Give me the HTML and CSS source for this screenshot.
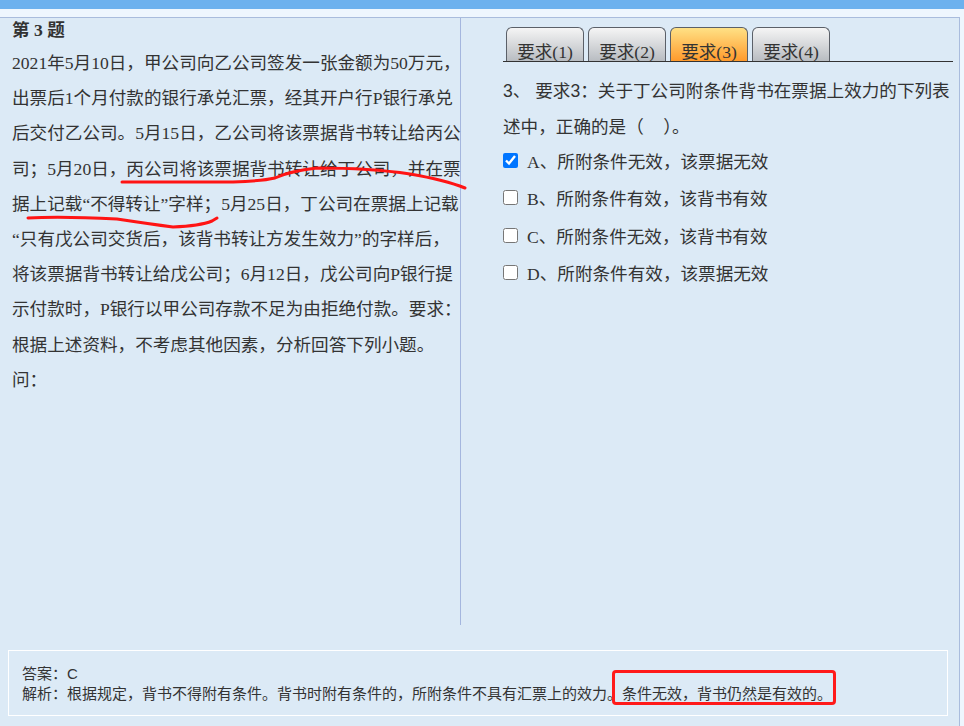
FILE: index.html
```html
<!DOCTYPE html>
<html lang="zh-CN">
<head>
<meta charset="utf-8">
<title>第 3 题</title>
<link rel="stylesheet" href="styles.css">
</head>
<body>
<div class="topbar"></div>
<div class="panel">
  <div class="cols">
    <div class="left">
      <h3 class="qtitle">第 3 题</h3>
      <p class="stem">2021年5月10日，甲公司向乙公司签发一张金额为50万元，<br>出票后1个月付款的银行承兑汇票，经其开户行P银行承兑<br>后交付乙公司。5月15日，乙公司将该票据背书转让给丙公<br>司；5月20日，丙公司将该票据背书转让给丁公司，并在票<br>据上记载“不得转让”字样；5月25日，丁公司在票据上记载<br>“只有戊公司交货后，该背书转让方发生效力”的字样后，<br>将该票据背书转让给戊公司；6月12日，戊公司向P银行提<br>示付款时，P银行以甲公司存款不足为由拒绝付款。要求：<br>根据上述资料，不考虑其他因素，分析回答下列小题。<br>问：</p>
      <svg class="marks" width="470" height="240" viewBox="0 0 470 240">
        <path d="M122 164 L233 164 Q262 163 275 160 Q290 153 317 150 Q370 150 410 156 Q445 162 465 170" />
        <path d="M28 200 Q60 198 117 201 Q150 206 173 209 Q200 208 212 203 L217 200" />
      </svg>
    </div>
    <div class="right">
      <div class="tabs">
        <div class="tab">要求(1)</div>
        <div class="tab">要求(2)</div>
        <div class="tab active">要求(3)</div>
        <div class="tab">要求(4)</div>
      </div>
      <p class="qtext">3、 要求3：关于丁公司附条件背书在票据上效力的下列表<br>述中，正确的是（&nbsp;&nbsp;&nbsp;&nbsp;）。</p>
      <ul class="opts">
        <li class="opt"><input type="checkbox" checked><span class="lbl"><span class="letter">A</span>、所附条件无效，该票据无效</span></li>
        <li class="opt"><input type="checkbox"><span class="lbl"><span class="letter">B</span>、所附条件有效，该背书有效</span></li>
        <li class="opt"><input type="checkbox"><span class="lbl"><span class="letter">C</span>、所附条件无效，该背书有效</span></li>
        <li class="opt"><input type="checkbox"><span class="lbl"><span class="letter">D</span>、所附条件有效，该票据无效</span></li>
      </ul>
    </div>
  </div>
  <div class="answer">
    <div class="aline">答案：C</div>
    <div class="aline">解析：根据规定，背书不得附有条件。背书时附有条件的，所附条件不具有汇票上的效力。<span class="mark">条件无效，背书仍然是有效的。</span></div>
  </div>
</div>
</body>
</html>
```
FILE: styles.css
```css
html, body {
  margin: 0;
  padding: 0;
}
body {
  background: #eef6fe;
  color: #333;
  font-family: "Liberation Serif", "Noto Sans CJK SC", serif;
  width: 964px;
  height: 726px;
  overflow: hidden;
}
.topbar {
  height: 9px;
  background: #6db1ee;
}
.panel {
  margin-top: 8px;
  width: 960px;
  height: 720px;
  box-sizing: border-box;
  border-top: 1px solid #a9bcdd;
  border-right: 1px solid #a9bcdd;
  background: #dceaf6;
}
.cols {
  display: flex;
}
.left {
  position: relative;
  width: 461px;
  height: 607px;
  box-sizing: border-box;
  border-right: 1px solid #a4b6de;
  padding-left: 12px;
}
.qtitle {
  margin: 0;
  font-size: 17.6px;
  line-height: 24px;
  font-weight: bold;
}
.stem {
  margin: 4px 0 0;
  font-size: 17.6px;
  line-height: 35.2px;
  white-space: nowrap;
}
.marks {
  position: absolute;
  left: 0;
  top: 0;
  overflow: visible;
  pointer-events: none;
}
.marks path {
  fill: none;
  stroke: #ff1414;
  stroke-width: 3;
  stroke-linecap: round;
  stroke-linejoin: round;
}
.right {
  flex: 1;
  padding: 9px 6px 0 42px;
}
.tabs {
  display: flex;
  gap: 4px;
  padding-left: 3px;
  border-bottom: 1px solid #333;
}
.tab {
  width: 78px;
  height: 34px;
  box-sizing: border-box;
  border: 1px solid #5b6068;
  border-bottom: none;
  border-radius: 6px 6px 0 0;
  background: linear-gradient(#f5f5f5, #b8bcc1);
  text-align: center;
  font-size: 17.6px;
  line-height: 20px;
  padding-top: 14px;
  color: #333;
}
.tab.active {
  background: linear-gradient(#ffe185, #ff9a2c);
}
.qtext {
  margin: 11px 0 0;
  font-family: "Liberation Sans", "Noto Sans CJK SC", sans-serif;
  font-size: 17.6px;
  line-height: 36px;
  white-space: nowrap;
}
.opts {
  list-style: none;
  margin: 0;
  padding: 0;
  display: flex;
  flex-direction: column;
  gap: 7.5px;
}
.opt {
  height: 30px;
  display: flex;
  align-items: center;
  gap: 9px;
  font-size: 17.6px;
}
.opt input {
  width: 15px;
  height: 15px;
  margin: 0;
}
.letter {
  font-family: "Liberation Serif", serif;
}
.answer {
  margin: 25px 0 0 8px;
  width: 940px;
  box-sizing: border-box;
  border: 1px solid #fff;
  padding: 13px 13px 11px;
  font-family: "Liberation Sans", "Noto Sans CJK SC", sans-serif;
  font-size: 15px;
  line-height: 20px;
}
.mark {
  position: relative;
}
.mark::after {
  content: "";
  position: absolute;
  left: -10px;
  right: -4px;
  top: -15px;
  bottom: -3px;
  border: 3px solid #ff1a1a;
  border-radius: 4px;
}
```
